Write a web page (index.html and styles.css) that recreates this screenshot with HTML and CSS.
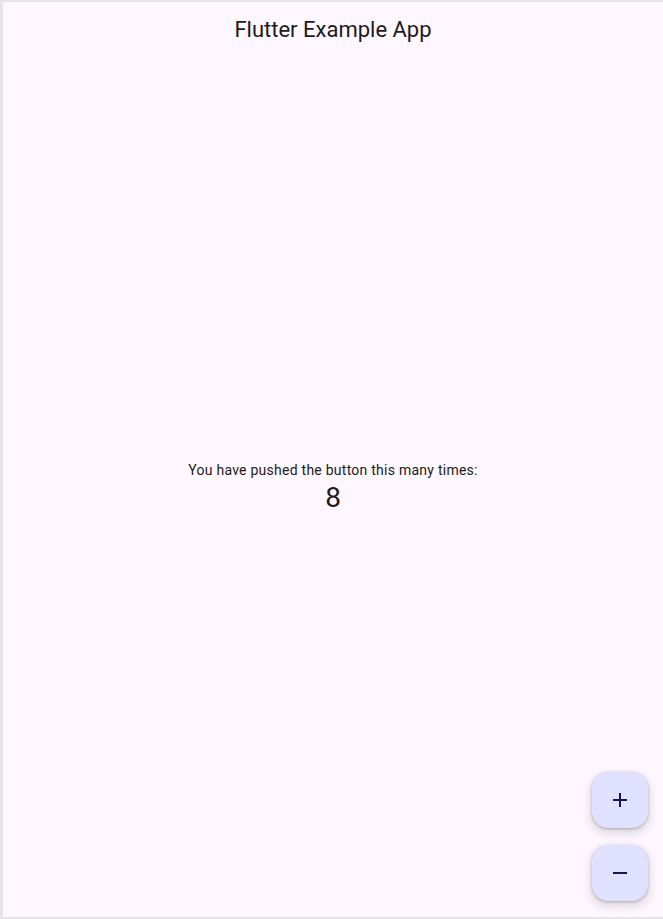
FILE: index.html
```html
<!DOCTYPE html>
<html lang="en">
<head>
<meta charset="utf-8">
<title>Flutter Example App</title>
<link rel="stylesheet" href="styles.css">
</head>
<body>
<div class="frame">
  <div class="app">
    <header class="app-bar">
      <h1 class="app-title">Flutter Example App</h1>
    </header>
    <main class="content">
      <p class="label">You have pushed the button this many times:</p>
      <p class="counter">8</p>
    </main>
    <div class="fabs">
      <button class="fab" aria-label="Increment">
        <svg viewBox="0 0 24 24" width="24" height="24"><path d="M19 13h-6v6h-2v-6H5v-2h6V5h2v6h6v2z"/></svg>
      </button>
      <button class="fab" aria-label="Decrement">
        <svg viewBox="0 0 24 24" width="24" height="24"><path d="M19 13H5v-2h14v2z"/></svg>
      </button>
    </div>
  </div>
</div>
</body>
</html>
```
FILE: styles.css
```css
html, body {
  margin: 0;
  padding: 0;
  height: 100%;
}
body {
  background: #e5e5e5;
  font-family: Roboto, "Liberation Sans", sans-serif;
}
.frame {
  box-sizing: border-box;
  height: 919px;
  padding: 2px 0 2px 3px;
}
.app {
  position: relative;
  height: 100%;
  background: #fef7ff;
  display: flex;
  flex-direction: column;
  color: #1d1b20;
}
.app-bar {
  height: 56px;
  flex: none;
  display: flex;
  align-items: center;
  justify-content: center;
}
.app-title {
  margin: 0;
  font-size: 22px;
  font-weight: 400;
  line-height: 28px;
  color: #1d1b20;
}
.content {
  flex: 1;
  display: flex;
  flex-direction: column;
  align-items: center;
  justify-content: center;
}
.label {
  margin: 0;
  font-size: 14px;
  line-height: 20px;
  letter-spacing: 0.25px;
}
.counter {
  margin: 0;
  font-size: 28px;
  line-height: 36px;
}
.fabs {
  position: absolute;
  right: 15px;
  bottom: 16px;
  display: flex;
  flex-direction: column;
  gap: 17px;
}
.fab {
  width: 56px;
  height: 56px;
  border: none;
  border-radius: 16px;
  background: #e0e0ff;
  color: #12175c;
  display: flex;
  align-items: center;
  justify-content: center;
  padding: 0;
  box-shadow: 0 1px 3px rgba(0,0,0,0.25), 0 4px 8px 3px rgba(0,0,0,0.1);
}
.fab svg {
  fill: currentColor;
}
```
